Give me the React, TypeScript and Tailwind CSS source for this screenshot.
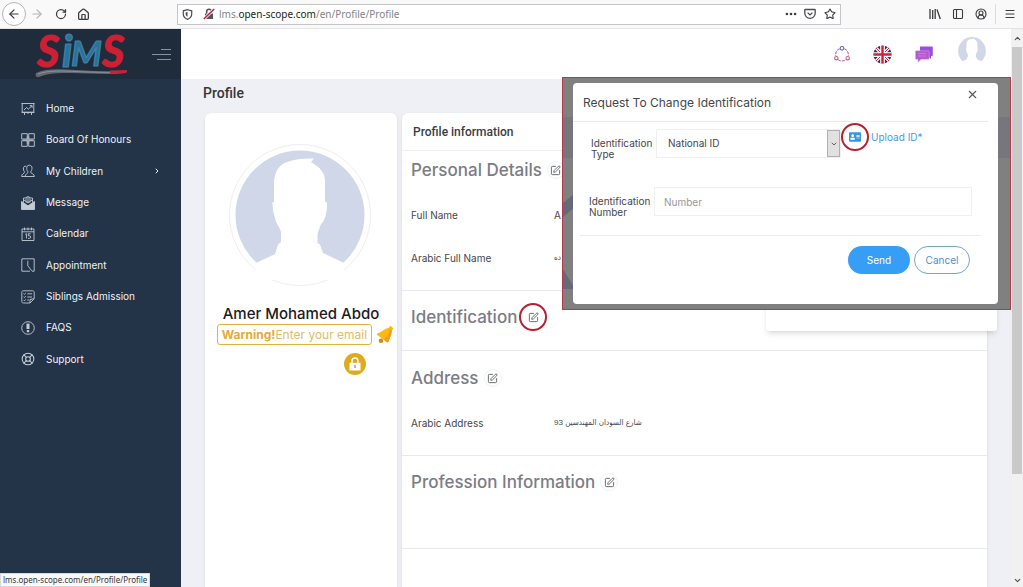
import React, { useState } from "react";
import type { ReactNode } from "react";
import {
  ArrowLeft,
  ArrowRight,
  ChevronDown,
  ChevronRight,
  ChevronUp,
  CircleUserRound,
  House,
  LifeBuoy,
  Menu,
  MoreHorizontal,
  PanelLeft,
  RotateCw,
  SquarePen,
  Star,
  X,
} from "lucide-react";
import { FaAddressCard } from "react-icons/fa";

const svgProps = {
  viewBox: "0 0 14 14",
  fill: "none",
  stroke: "currentColor",
  strokeWidth: 0.9,
  className: "size-[14px] shrink-0",
};

const HomeIcon = () => (
  <svg {...svgProps}>
    <path d="M.5 1.5h13M1.2 1.5v8.8h11.6V1.5M.5 10.3h13M3.5 10.5v2.5M10.5 10.5v2.5M7 10.5v1.5M3 8l2.5-2.5 1.8 1.6L11 3.8M8.8 3.6h2.3v2.2" />
  </svg>
);

const BoardIcon = () => (
  <svg {...svgProps}>
    <path d="M.7.7h5.6v5.4H.7zM7.7.7h5.6v5.4H7.7zM.7 7.7h5.6v5.6H.7zM7.7 7.7h5.6v5.6H7.7z" />
    <path d="M6.2 3v8M7.8 3v8M2 6.2h10M2 7.7h10" strokeWidth={0.5} />
  </svg>
);

const ChildrenIcon = () => (
  <svg {...svgProps}>
    <path d="M8.2 1.2c2 0 3 1.4 2.8 3.3-.1 1.6-.7 2.4-1.1 3v1.3c.3.8 3.4.8 3.5 3.7H4.2M8.2 1.2C6.3 1.2 5.6 2.7 5.7 4.5c.1 1.5.6 2.3 1.1 3v1.3c-.5 1-2.6 1-2.6 3.7" />
    <path d="M5.2 2.2C3.2 1.7 2.2 3.2 2.4 5c.1 1.2.5 2 .9 2.5v1.3C3 9.8.7 9.5.6 12.5h3.6" />
  </svg>
);

const MessageIcon = () => (
  <svg {...svgProps}>
    <path d="M.5 5.5 7 9.8l6.5-4.3v8H.5z" fill="currentColor" />
    <path d="M2.5 6.5V2h9v4.5M5 2C5 .3 9 .3 9 2M4 4h6M4.5 5.8h5" />
    <path d="M3 4 7 7l4-3" />
  </svg>
);

const CalendarIcon = () => (
  <svg {...svgProps}>
    <path d="M1 2h12v11.5H1zM1 4.8h12M3.5.5v2.8M7 .5v2.8M10.5.5v2.8" />
    <path d="M4.3 7.3 5.4 6.7v4.8M9.6 6.8H7.3v2h1.3c1.5 0 1.5 2.5 0 2.5H7" />
  </svg>
);

const AppointmentIcon = () => (
  <svg {...svgProps}>
    <path d="M1 .8h12.2v12.4H11M9 13.2H.8V.8M6.8 2.8v5l4 5" />
  </svg>
);

const SiblingsIcon = () => (
  <svg {...svgProps}>
    <path d="M9 13H2.5C1.3 13 .8 12.3.8 11.5v-9C.8 1.3 1.5.8 2.3.8h9.2c1.1 0 1.7.7 1.7 1.6v6.3L9 13V9.5l4-.8" />
    <path d="m2.5 3.5.8.8L4.8 3M2.5 6.7l.8.8 1.5-1.3M2.5 9.9l.8.8 1.5-1.3M6.3 3.8h4.8M6.3 7H11M6.3 10H8" />
  </svg>
);

const FaqIcon = () => (
  <svg {...svgProps}>
    <circle cx="7" cy="7" r="6.3" />
    <path d="M7 2.6v5.4" strokeWidth={3} />
    <path d="M7 9v2.2" strokeWidth={2.4} />
  </svg>
);

const menu: { name: string; icon: ReactNode; more?: boolean }[] = [
  { name: "Home", icon: <HomeIcon /> },
  { name: "Board Of Honours", icon: <BoardIcon /> },
  { name: "My Children", icon: <ChildrenIcon />, more: true },
  { name: "Message", icon: <MessageIcon /> },
  { name: "Calendar", icon: <CalendarIcon /> },
  { name: "Appointment", icon: <AppointmentIcon /> },
  { name: "Siblings Admission", icon: <SiblingsIcon /> },
  { name: "FAQS", icon: <FaqIcon /> },
  { name: "Support", icon: <LifeBuoy size={14} strokeWidth={1.8} /> },
];

function Toolbar() {
  return (
    <header className="flex h-[29px] shrink-0 items-center border-b border-[#e3e3e6] bg-[#f9f9fa] text-[#3b3b40]">
      <button
        aria-label="Back"
        className="ml-[2px] flex size-6 items-center justify-center rounded-full border border-[#b5b5b8] bg-white"
      >
        <ArrowLeft size={14} />
      </button>
      <button aria-label="Forward" className="ml-1 text-[#b4b4b6]">
        <ArrowRight size={14} />
      </button>
      <button aria-label="Reload" className="ml-[11px]">
        <RotateCw size={12} strokeWidth={2.5} />
      </button>
      <button aria-label="Home" className="ml-[10px]">
        <House size={13} strokeWidth={2.3} />
      </button>
      <div className="mr-[88px] ml-[87px] flex h-[21px] flex-1 items-center border border-[#c6c6c9] bg-white font-['Noto_Sans',sans-serif] text-[10px]">
        <svg viewBox="0 0 12 12" className="ml-1 size-[11px]" fill="none">
          <path
            d="M6 .8 10.6 2v3.5c0 3-2 4.8-4.6 5.8-2.6-1-4.6-2.8-4.6-5.8V2z"
            stroke="#4a4a50"
            strokeWidth="1.3"
          />
          <path d="M6 3.2v5.3c-1.4-.7-2-1.6-2-3V3.700z" fill="#4a4a50" />
        </svg>
        <svg viewBox="0 0 12 12" className="ml-[10px] size-3" fill="none">
          <path d="M2 5.5h8V11H2z" fill="#55555a" />
          <path d="M3.7 5.5V3.6a2.3 2.3 0 0 1 4.6 0v1.9" stroke="#55555a" strokeWidth="1.5" />
          <path d="M.8 11 11.2 1" stroke="#fff" strokeWidth="3" />
          <path d="M.8 11 11.2 1" stroke="#c3203f" strokeWidth="1.6" />
        </svg>
        <label htmlFor="address" className="ml-1 pt-px whitespace-nowrap text-[#85858a]">
          lms.<span className="text-[#1d1d20]">open-scope.com</span>/en/Profile/Profile
        </label>
        <input id="address" className="min-w-0 flex-1 outline-none" />
        <button aria-label="Page actions" className="mr-[6px]">
          <MoreHorizontal size={14} strokeWidth={2.5} />
        </button>
        <button aria-label="Save to Pocket" className="mr-[8px]">
          <svg viewBox="0 0 12 12" className="size-3" fill="none" stroke="#4a4a50" strokeWidth="1.3">
            <path d="M1.3 1.5h9.4c.3 0 .5.2.5.5v3.2a5.2 5.2 0 0 1-10.4 0V2c0-.3.2-.5.5-.5z" />
            <path d="m3.6 4.6 2.4 2.3 2.4-2.3" />
          </svg>
        </button>
        <button aria-label="Bookmark" className="mr-[4px]">
          <Star size={12} strokeWidth={2.2} />
        </button>
      </div>
      <button aria-label="Library">
        <svg viewBox="0 0 12 12" className="size-3" fill="none" stroke="#3b3b40" strokeWidth="1.3">
          <path d="M1 1v10M3.7 2v9M6.2 1v10M8 1.5 11.3 11" />
        </svg>
      </button>
      <button aria-label="Sidebars" className="ml-[11px]">
        <PanelLeft size={12} strokeWidth={2.2} />
      </button>
      <button aria-label="Account" className="ml-[11px]">
        <CircleUserRound size={12} strokeWidth={2.2} />
      </button>
      <button aria-label="Open menu" className="ml-[8px] border-l border-[#dcdcde] py-1 pr-[7px] pl-[8px]">
        <Menu size={12} strokeWidth={2.3} />
      </button>
    </header>
  );
}

function Logo() {
  return (
    <svg viewBox="0 0 96 50" className="h-[50px] w-24 overflow-visible" role="img" aria-label="SiMS">
      <g
        fontFamily="Lato, sans-serif"
        fontStyle="italic"
        fontWeight="700"
        strokeWidth="1.2"
        strokeLinejoin="round"
      >
        <text x="2" y="38" fontSize="43" fill="#cf1f33" stroke="#cf1f33">
          S
        </text>
        <text x="27" y="38" fontSize="43" fill="#2b7299" stroke="#3f83a6">
          i
        </text>
        <text x="36" y="37" fontSize="35" fill="#2b7299" stroke="#3f83a6">
          M
        </text>
        <text x="67" y="38" fontSize="43" fill="#cf1f33" stroke="#cf1f33">
          S
        </text>
      </g>
      <path d="M1 44c10-5 25-4 40-3 18 1 35 2 51 1l-1 2c-18 2-37 0-54 0-14 0-24 0-33 4-3 1-4-2-3-4z" fill="#626973" />
      <path d="M3 45c10-4 28-3 38-2.5 18 1 35 1 49 .5" fill="none" stroke="#9ca0a6" strokeWidth=".7" />
      <path d="M75 41.500 92 41l-1 3-16 .3z" fill="#c42238" />
    </svg>
  );
}

function Sidebar() {
  return (
    <aside className="w-[181px] shrink-0 bg-[#233348] text-[#eef2f6]">
      <div className="flex h-[50px] items-center bg-[#1f2c3c] pl-[35px]">
        <Logo />
        <button aria-label="Toggle menu" className="ml-[21px] flex flex-col items-end gap-1">
          <span className="h-px w-[10px] bg-[#8793a0]" />
          <span className="h-px w-[19px] bg-[#8793a0]" />
          <span className="h-px w-[14px] bg-[#8793a0]" />
        </button>
      </div>
      <nav className="pt-[14px]">
        <ul className="grid h-[282px] grid-rows-9">
          {menu.map((item) => (
            <li key={item.name}>
              <a href="#" className="flex h-full items-center gap-[11px] pr-5 pl-[21px] text-[10px]">
                <span className="text-[#c3ccd6]">{item.icon}</span>
                <span className="flex-1">{item.name}</span>
                {item.more && <ChevronRight size={8} strokeWidth={3} />}
              </a>
            </li>
          ))}
        </ul>
      </nav>
    </aside>
  );
}

function Silhouette({ className }: { className: string }) {
  return (
    <svg viewBox="6 6 130 130" className={className}>
      <circle cx="71" cy="71" r="64.5" fill="#cfd7e8" />
      <path
        d="M85 14.500 82 18C91 23 96 29 96 37V58Q98.500 57 98 62C97.500 70 96 77 92 80 90 86 88.500 88 88.500 92V99L91 100.500 94 109 115 119V140H27V119L46 110 49 100.500 52 98V88C51.500 84 47 80 46 74 44 68 43.500 63 43.500 58H45V37C46 27 51 20 58 18 66 15 76 14 85 14.500z"
        fill="#fff"
      />
    </svg>
  );
}

function TopBar() {
  return (
    <div className="flex h-[50px] shrink-0 items-center justify-end gap-[23px] bg-white pr-[25px]">
      <button aria-label="Share">
        <svg viewBox="0 0 16 16" className="size-4" fill="none" strokeWidth="1.1">
          <path d="M5.8 2.8a6 6 0 0 0-4 7.200M10.200 2.800a6 6 0 0 1 4 7.200M4 13.600a6.500 6.500 0 0 0 8 0" stroke="#a86fa8" strokeDasharray="3 1" />
          <circle cx="8" cy="2.3" r="1.8" stroke="#7367c9" />
          <circle cx="2.3" cy="12.2" r="1.7" stroke="#d0617f" />
          <circle cx="13.7" cy="12.2" r="1.7" stroke="#d0617f" />
        </svg>
      </button>
      <button aria-label="English">
        <svg viewBox="0 0 20 20" className="size-[19px]">
          <clipPath id="flag">
            <circle cx="10" cy="10" r="9.5" />
          </clipPath>
          <g clipPath="url(#flag)">
            <path d="M0 0h20v20H0z" fill="#27346f" />
            <path d="m0 0 20 20M20 0 0 20" stroke="#fff" strokeWidth="3.2" />
            <path d="m0 0 20 20M20 0 0 20" stroke="#d4213d" strokeWidth="1" />
            <path d="M10 0v20M0 10h20" stroke="#fff" strokeWidth="5" />
            <path d="M10 0v20M0 10h20" stroke="#d4213d" strokeWidth="2.6" />
          </g>
        </svg>
      </button>
      <button aria-label="Messages">
        <svg viewBox="0 0 18 17" className="h-[17px] w-[18px]">
          <path d="M5 .5h12c.5 0 .8.3.8.8v8c0 .5-.3.8-.8.8h-1v3l-3-3H5z" fill="#9a4fdc" />
          <path d="M1.200 4.800h12.300c.4 0 .7.3.7.7v7c0 .5-.3.8-.8.8H6l-3 3v-3H1.200c-.4 0-.7-.3-.7-.7V5.500c0-.4.3-.7.7-.7z" fill="#b45acb" stroke="#dba9ea" strokeWidth=".5" />
          <path d="M3 7.500h8M3 10h8" stroke="#d08be0" strokeWidth=".7" />
        </svg>
      </button>
      <button aria-label="User menu" className="pb-[6px] pl-[2px]">
        <Silhouette className="size-[28px]" />
      </button>
    </div>
  );
}

function ProfileCard() {
  return (
    <section className="flex w-[192px] shrink-0 flex-col rounded-t-md bg-white pt-[31px] shadow-sm">
      <div className="ml-6 flex size-[142px] items-center justify-center rounded-full border border-[#eeeef0]">
        <Silhouette className="size-[130px]" />
      </div>
      <h2 className="mt-[18px] text-center text-[15px] leading-5 font-medium whitespace-nowrap text-[#1b1b1f]">
        Amer Mohamed Abdo
      </h2>
      <div className="flex items-center gap-1 pl-3">
        <p className="flex h-[21px] w-[155px] shrink-0 items-center justify-center rounded-[3px] border border-[#dfb440] text-[12px] leading-4 whitespace-nowrap text-[#e3bc62]">
          <strong className="font-bold text-[#e6ab35]">Warning!</strong>
          Enter your email
        </p>
        <svg viewBox="0 0 18 20" className="h-5 w-[18px]">
          <path d="M14.500.8 17.300 3.200 16 5.300C16.200 9 14 12.500 12.500 16.800L11.300 17.500 1 9.800V8.500C5.500 7.500 8.500 3.500 12.800 2.700z" fill="#fbb914" />
          <path d="M15.800 5.500C15.500 9.500 13.500 12.500 12.500 16.800L11.300 17.500 7.500 14.500C11 12.500 13 9 14 4z" fill="#f49f17" />
          <circle cx="5" cy="15.800" r="2.200" fill="#c98a17" />
        </svg>
      </div>
      <button
        aria-label="Change password"
        className="mt-2 mr-[31px] flex size-[22px] items-center justify-center self-end rounded-full bg-[#dfab1d]"
      >
        <svg viewBox="0 0 12 14" className="h-[14px] w-3">
          <path d="M3 6V4a3 3 0 0 1 6 0v2" fill="none" stroke="#fff" strokeWidth="1.4" />
          <path d="M.5 5.800h11v7.700H.5z" fill="#fff" />
          <path d="M6 8v3" stroke="#b99748" strokeWidth="1.400" />
        </svg>
      </button>
    </section>
  );
}

type SectionProps = {
  title: string;
  className: string;
  marked?: boolean;
  children?: ReactNode;
};

function Section({ title, className, marked, children }: SectionProps) {
  return (
    <div className={`border-b border-[#e8e9ec] px-[9px] ${className}`}>
      <div className="flex items-center">
        <h3 className="text-[17px] leading-6 font-medium whitespace-nowrap text-[#7b7c85]">{title}</h3>
        {marked ? (
          <button
            aria-label={`Edit ${title}`}
            className="-my-1 ml-[2px] flex size-7 items-center justify-center rounded-full border-2 border-[#b8202f] text-[#5c6066]"
          >
            <SquarePen size={11} />
          </button>
        ) : (
          <button
            aria-label={`Edit ${title}`}
            className="ml-[5px] flex size-[18px] items-center justify-center rounded-full border border-[#f1f1f4] text-[#5c6066]"
          >
            <SquarePen size={11} />
          </button>
        )}
      </div>
      {children}
    </div>
  );
}

type FieldProps = {
  label: string;
  value: string;
  className: string;
  arabic?: boolean;
};

function Field({ label, value, className, arabic }: FieldProps) {
  return (
    <dl className={`flex text-[10px] leading-4 text-[#45464c] ${className}`}>
      <dt className="w-[143px]">{label}</dt>
      {arabic ? (
        <dd dir="rtl" className="font-['Liberation_Sans','DejaVu_Sans_Condensed','DejaVu_Sans',sans-serif] text-[8px]">
          {value}
        </dd>
      ) : (
        <dd>{value}</dd>
      )}
    </dl>
  );
}

function ProfileInformation() {
  return (
    <section className="min-w-0 flex-1 rounded-t-md bg-white shadow-sm">
      <h2 className="flex h-[38px] items-center border-b border-[#ededf0] px-[11px] font-[Roboto,sans-serif] text-[12px] font-medium text-[#3c3d42]">
        Profile information
      </h2>
      <Section title="Personal Details" className="h-[140px] pt-[7px]">
        <Field label="Full Name" value="A" className="mt-[25px]" />
        <Field label="Arabic Full Name" value="ده" className="mt-[27px]" arabic />
      </Section>
      <Section title="Identification" className="h-[60px] pt-[14px]" marked />
      <Section title="Address" className="h-[105px] pt-[15px]">
        <Field label="Arabic Address" value="شارع السودان المهندسين 93" className="mt-[25px]" arabic />
      </Section>
      <Section title="Profession Information" className="h-[93px] pt-[14px]" />
    </section>
  );
}

function IdentificationDialog() {
  const [type, setType] = useState("National ID");
  const [number, setNumber] = useState("");

  return (
    <div className="absolute top-[48px] right-0 h-[233px] w-[449px] overflow-hidden border border-[#b5394c] bg-[linear-gradient(#808080_39px,#76767c_39px_80px,#808080_80px)] pt-[5px] pr-3 pl-[10px]">
      <svg viewBox="0 0 12 100" className="absolute top-[113px] left-0 h-[100px] w-3">
        <path d="M0 12 12 2v14L0 26zM0 78l12 20H0z" fill="#666a78" />
      </svg>
      <form
        role="dialog"
        aria-label="Request To Change Identification"
        className="relative h-[221px] rounded-[4px] bg-white text-[10px] leading-[11px] text-[#45464c]"
        onSubmit={(e) => e.preventDefault()}
      >
        <div className="mr-[10px] flex h-[39px] items-center border-b border-[#ebecee] pr-[9px] pl-[10px]">
          <h2 className="flex-1 text-[12px]">Request To Change Identification</h2>
          <button type="button" aria-label="Close" className="mb-4 text-[#55565a]">
            <X size={13} strokeWidth={2} />
          </button>
        </div>
        <div className="flex h-[58px] pt-[7px] pl-[18px]">
          <label htmlFor="id-type" className="mt-[9px] w-[65px] shrink-0">
            Identification
            <br />
            Type
          </label>
          <div className="flex h-[29px] w-[185px] border border-[#f0f0f3]">
            <select
              id="id-type"
              value={type}
              onChange={(e) => setType(e.target.value)}
              className="min-w-0 flex-1 appearance-none pl-[11px] outline-none"
            >
              <option>National ID</option>
              <option>Passport</option>
            </select>
            <span className="flex w-[13px] items-center justify-center border border-[#b0b0b2] bg-[#e1e1e2]">
              <ChevronDown size={8} strokeWidth={2.5} />
            </span>
          </div>
          <a href="#" className="-mt-[6px] flex h-7 items-center gap-[2px] text-[#4e9ad8]">
            <span className="flex size-7 items-center justify-center rounded-full border-2 border-[#b8202f] text-[#3596e8]">
              <FaAddressCard size={12} />
            </span>
            Upload ID*
          </a>
        </div>
        <div className="mr-[17px] ml-[7px] flex h-[56px] border-b border-[#ebecee] pt-[7px] pr-[9px] pl-[9px]">
          <label htmlFor="id-number" className="mt-[9px] w-[65px] shrink-0">
            Identification
            <br />
            Number
          </label>
          <input
            id="id-number"
            placeholder="Number"
            value={number}
            onChange={(e) => setNumber(e.target.value)}
            className="h-[29px] min-w-0 flex-1 border border-[#f0f0f3] px-[9px] outline-none placeholder:text-[#95969c]"
          />
        </div>
        <div className="flex justify-end gap-1 pt-[10px] pr-[28px]">
          <button className="h-7 w-[62px] rounded-full bg-[#369ff5] text-white">Send</button>
          <button type="button" className="h-7 w-14 rounded-full border border-[#6fa9bd] text-[#4e8fcf]">
            Cancel
          </button>
        </div>
      </form>
    </div>
  );
}

export default function App() {
  return (
    <div className="relative flex h-screen flex-col overflow-hidden bg-[#eff0f5] font-[Inter,sans-serif]">
      <Toolbar />
      <div className="flex min-h-0 flex-1">
        <Sidebar />
        <main className="relative flex min-w-0 flex-1 flex-col">
          <TopBar />
          <h1 className="pt-[5px] pl-[22px] font-[Roboto,sans-serif] text-[14px] leading-[18px] font-medium text-[#35363b]">
            Profile
          </h1>
          <div className="mt-[11px] flex min-h-0 flex-1 gap-[5px] pr-6 pl-6">
            <ProfileCard />
            <ProfileInformation />
          </div>
          <div className="absolute top-[260px] right-[14px] h-[42px] w-[231px] rounded-[3px] bg-white shadow-md" />
          <IdentificationDialog />
        </main>
        <div className="flex w-3 shrink-0 flex-col items-center bg-[#f1f1f1] text-[#505050]">
          <span className="flex h-[18px] items-center">
            <ChevronUp size={9} strokeWidth={3} />
          </span>
          <span className="h-[427px] w-[10px] bg-[#c9c9ca]" />
          <span className="mt-auto mb-[2px]">
            <ChevronDown size={9} strokeWidth={3} />
          </span>
        </div>
      </div>
      <div className="absolute bottom-0 left-0 border border-[#d8d8da] bg-[#f9f9fa] px-[2px] font-['Noto_Sans',sans-serif] text-[8px] leading-[12px] text-[#35363c]">
        lms.open-scope.com/en/Profile/Profile
      </div>
    </div>
  );
}
